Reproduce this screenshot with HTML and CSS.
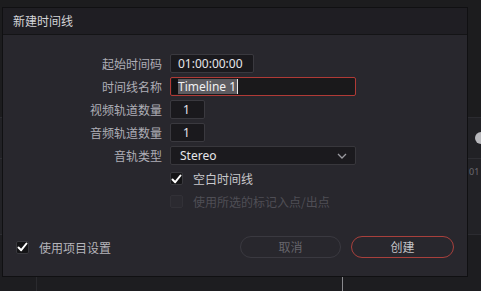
FILE: index.html
```html
<!DOCTYPE html>
<html lang="zh-CN">
<head>
<meta charset="utf-8">
<link rel="stylesheet" href="styles.css">
</head>
<body>
<div class="app">
  <div class="bg-top"></div>
  <div class="bg-track">
    <div class="bg-knob"></div>
  </div>
  <div class="bg-ruler"><span class="bg-tc">01</span></div>
  <div class="bg-bottom">
    <div class="bg-left"></div>
    <div class="bg-playhead"></div>
  </div>
</div>

<div class="dialog">
  <div class="dialog-title">新建时间线</div>
  <div class="dialog-body">
    <div class="form">
      <label class="lbl">起始时间码</label>
      <div class="field"><div class="input tc">01:00:00:00</div></div>

      <label class="lbl">时间线名称</label>
      <div class="field"><div class="input name focus"><span class="pre"></span><span class="sel">Timeline 1</span><span class="caret"></span></div></div>

      <label class="lbl">视频轨道数量</label>
      <div class="field"><div class="input num">1</div></div>

      <label class="lbl">音频轨道数量</label>
      <div class="field"><div class="input num">1</div></div>

      <label class="lbl">音轨类型</label>
      <div class="field">
        <div class="input select">
          <span>Stereo</span>
          <svg class="chev" width="10" height="6" viewBox="0 0 10 6"><path d="M1 1 L5 5 L9 1" fill="none" stroke="#9a9aa0" stroke-width="1.3"/></svg>
        </div>
      </div>

      <span class="lbl"></span>
      <div class="field check-row">
        <span class="cb checked">
          <svg width="11" height="10" viewBox="0 0 11 10"><path d="M1.5 5.5 L4.2 8.2 L9.5 1.5" fill="none" stroke="#ffffff" stroke-width="2" stroke-linecap="round" stroke-linejoin="round"/></svg>
        </span>
        <span class="cb-text">空白时间线</span>
      </div>

      <span class="lbl"></span>
      <div class="field check-row">
        <span class="cb disabled"></span>
        <span class="cb-text dim">使用所选的标记入点/出点</span>
      </div>
    </div>

    <div class="footer">
      <div class="check-row">
        <span class="cb checked">
          <svg width="11" height="10" viewBox="0 0 11 10"><path d="M1.5 5.5 L4.2 8.2 L9.5 1.5" fill="none" stroke="#ffffff" stroke-width="2" stroke-linecap="round" stroke-linejoin="round"/></svg>
        </span>
        <span class="cb-text">使用项目设置</span>
      </div>
      <div class="buttons">
        <button class="btn cancel">取消</button>
        <button class="btn create">创建</button>
      </div>
    </div>
  </div>
</div>
</body>
</html>
```

FILE: styles.css
```css
* { box-sizing: border-box; }

html, body {
  margin: 0;
  padding: 0;
  width: 481px;
  height: 291px;
  overflow: hidden;
  background: #1b1b1d;
  font-family: "Noto Sans", "Noto Sans CJK SC", sans-serif;
}

.app {
  display: flex;
  flex-direction: column;
  height: 291px;
}

.bg-top {
  height: 118px;
  background: #1c1c1e;
  border-bottom: 1px solid #2b2b30;
}

.bg-track {
  height: 41px;
  background: #212125;
  border-bottom: 1px solid #2e2e33;
  display: flex;
  justify-content: flex-end;
  align-items: center;
}

.bg-knob {
  width: 6px;
  height: 12px;
  border-radius: 6px 0 0 6px;
  background: #b8b8bc;
}

.bg-ruler {
  height: 76px;
  background: #222226;
  border-bottom: 1px solid #2c2c31;
  display: flex;
  justify-content: flex-end;
  align-items: flex-start;
  padding-top: 6px;
}

.bg-tc {
  font-size: 9px;
  color: #6a6a70;
  width: 12px;
}

.bg-bottom {
  flex: 1;
  background: #1d1d20;
  display: flex;
}

.bg-left {
  width: 37px;
  border-right: 1px solid #2a2a2e;
}

.bg-playhead {
  margin-left: 305px;
  width: 1px;
  background: #8a8a8e;
}

/* dialog */
.dialog {
  position: absolute;
  left: 2px;
  top: 7px;
  width: 466px;
  height: 270px;
  border: 1px solid #101012;
  background: #28272d;
  display: flex;
  flex-direction: column;
}

.dialog-title {
  height: 27px;
  background: #1f1e23;
  border-bottom: 1px solid #141416;
  color: #d4d4d8;
  font-size: 12px;
  line-height: 26px;
  padding-left: 10px;
  font-family: "Noto Sans CJK SC", sans-serif;
}

.dialog-body {
  flex: 1;
  display: flex;
  flex-direction: column;
  justify-content: space-between;
  padding: 19px 13px 18px 13px;
}

.form {
  display: grid;
  grid-template-columns: 159px 1fr;
  column-gap: 8px;
  row-gap: 4px;
  margin-left: -13px;
}

.lbl {
  text-align: right;
  color: #aeaeb6;
  font-size: 12px;
  line-height: 19px;
  font-family: "Noto Sans CJK SC", sans-serif;
  height: 19px;
}

.field {
  height: 19px;
  display: flex;
  align-items: center;
}

.input {
  height: 19px;
  background: #1a191d;
  border: 1px solid #3a393f;
  border-radius: 2px;
  color: #e6e6ea;
  font-size: 12px;
  line-height: 17px;
  font-family: "Noto Sans", sans-serif;
  padding: 0 7px;
  display: flex;
  align-items: center;
}

.tc { width: 84px; }

.name {
  width: 186px;
  padding: 0 0 0 1px;
  border-color: #b03a36;
  background: #1a191b;
}

.name .pre {
  width: 6px;
  height: 15px;
  background: #111113;
}

.name .sel {
  background: #5c5b60;
  color: #f0f0f2;
  height: 15px;
  line-height: 15px;
  padding: 0 1px 0 0;
}

.name .caret {
  width: 1px;
  height: 15px;
  background: #e8e8e8;
}

.num {
  width: 35px;
  padding-left: 12px;
}

.select {
  width: 186px;
  justify-content: space-between;
  padding: 0 8px 0 9px;
  border-color: #38373c;
  background: #1b1a1e;
}

.check-row {
  display: flex;
  align-items: center;
  gap: 10px;
}

.cb {
  width: 13px;
  height: 13px;
  border-radius: 2px;
  background: #141416;
  border: 1px solid #38383d;
  display: flex;
  align-items: center;
  justify-content: center;
}

.cb.disabled {
  background: #2b2a30;
  border-color: #323137;
}

.cb-text {
  color: #c8c8cc;
  font-size: 12px;
  font-family: "Noto Sans CJK SC", sans-serif;
  line-height: 19px;
}

.cb-text.dim {
  color: #4f4e55;
}

.footer {
  display: flex;
  justify-content: space-between;
  align-items: center;
}

.footer .cb-text {
  color: #b4b4ba;
}

.buttons {
  display: flex;
  gap: 10px;
}

.btn {
  height: 22px;
  border-radius: 11px;
  background: transparent;
  font-family: "Noto Sans CJK SC", sans-serif;
  font-size: 12px;
  padding: 0;
  line-height: 20px;
}

.cancel {
  width: 101px;
  border: 1px solid #3a3940;
  color: #66656c;
}

.create {
  width: 103px;
  border: 1px solid #a8403c;
  color: #c4c4c8;
}
```
